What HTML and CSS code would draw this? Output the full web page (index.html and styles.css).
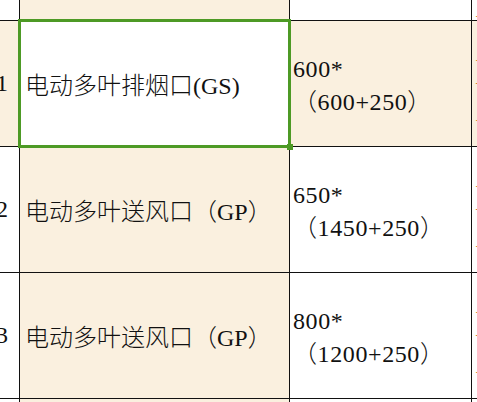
FILE: index.html
```html
<!DOCTYPE html>
<html lang="zh-CN">
<head>
<meta charset="utf-8">
<link rel="stylesheet" href="styles.css">
</head>
<body>
<div class="sheet">
  <div class="cell"></div>
  <div class="cell hl"></div>
  <div class="cell"></div>
  <div class="cell next"><span class="next-text">二</span></div>

  <div class="cell num hl">11</div>
  <div class="cell name active">电动多叶排烟口(GS)</div>
  <div class="cell size hl"><span>600*</span><span>（600+250）</span></div>
  <div class="cell next hl"><span class="next-text">二<br>一<br>二</span></div>

  <div class="cell num">12</div>
  <div class="cell name hl">电动多叶送风口（GP）</div>
  <div class="cell size"><span>650*</span><span>（1450+250）</span></div>
  <div class="cell next"><span class="next-text">二<br>一<br>二</span></div>

  <div class="cell num">13</div>
  <div class="cell name hl">电动多叶送风口（GP）</div>
  <div class="cell size"><span>800*</span><span>（1200+250）</span></div>
  <div class="cell next"><span class="next-text">二<br>一<br>二</span></div>

  <div class="cell"></div>
  <div class="cell hl"></div>
  <div class="cell"></div>
  <div class="cell"></div>
</div>
</body>
</html>
```

FILE: styles.css
```css
html, body {
  margin: 0;
  padding: 0;
  background: #ffffff;
  overflow: hidden;
}

.sheet {
  display: grid;
  grid-template-columns: 19px 269px 181px 1fr;
  grid-template-rows: 20px 125px 125px 125px 1fr;
  gap: 1px;
  width: 477px;
  height: 402px;
  background: #111111;
  font-family: "Liberation Serif", "Noto Sans CJK SC", serif;
  font-size: 24px;
  font-weight: 300;
  color: #111111;
}

.cell {
  background: #ffffff;
  overflow: hidden;
  white-space: nowrap;
  min-width: 0;
}

.hl {
  background: #faf0df;
}

.num {
  display: flex;
  align-items: center;
  justify-content: flex-end;
  padding-right: 11px;
}

.name {
  display: flex;
  align-items: center;
  padding-left: 5px;
}

.size {
  display: flex;
  flex-direction: column;
  justify-content: center;
  padding-left: 3px;
  padding-top: 4px;
  line-height: 33px;
  letter-spacing: 0.6px;
}

.active {
  position: relative;
  z-index: 2;
  overflow: visible;
  background: #ffffff;
  outline: 3px solid #4d9a25;
  outline-offset: -1px;
}

.active::after {
  content: "";
  position: absolute;
  right: -4px;
  bottom: -4px;
  width: 6px;
  height: 6px;
  background: #4d9a25;
}

.next {
  display: flex;
  align-items: center;
  padding-left: 3px;
}

.next-text {
  color: #d88630;
  font-family: "Noto Sans CJK SC", sans-serif;
  font-size: 20px;
  line-height: 30px;
}
```
